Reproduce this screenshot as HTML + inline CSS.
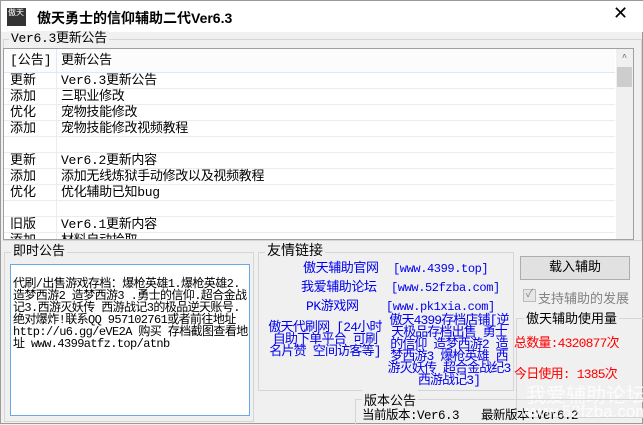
<!DOCTYPE html>
<html><head><meta charset="utf-8"><style>
*{margin:0;padding:0;box-sizing:border-box}
body{width:643px;height:424px;overflow:hidden;background:#f0f0f0;font-family:"Liberation Mono","Noto Sans CJK SC",monospace;font-size:12px;color:#000;position:relative;border:1px solid #9a9a9a}
.a{position:absolute;white-space:nowrap}
.title{left:0;top:0;width:643px;height:31px;background:#fff}
.gb{position:absolute;border:1px solid #d5d5d5}
.gl{position:absolute;background:#f0f0f0;padding:0 2px;top:-9px;left:6px;font-size:13px;line-height:16px}
.row{position:absolute;left:0;width:611px;height:16px;border-bottom:1px solid #ececec;line-height:15px;font-size:13px}
.row span{position:absolute;left:6px}
.row b{font-weight:normal;position:absolute;left:57px;letter-spacing:-0.3px}
.blue{color:#0000ee;font-size:13px;line-height:15px;letter-spacing:-0.4px}
</style></head><body>
<div class="a title"></div>
<div class="a" style="left:6px;top:7px;width:19px;height:18px;background:#333"><div style="color:#fff;font-size:8px;line-height:10px;padding:1px">傲天</div></div>
<div class="a" style="left:36px;top:7px;font-family:'Liberation Sans','Noto Sans CJK SC',sans-serif;font-weight:bold;font-size:14px">傲天勇士的信仰辅助二代Ver6.3</div>
<div class="a" style="left:612px;top:2px;font-size:18px;font-family:'Liberation Sans',sans-serif">✕</div>
<div class="gb" style="left:2px;top:38px;width:639px;height:202px"></div>
<div class="a" style="left:8px;top:30px;background:#f0f0f0;padding:0 2px;font-size:13px;line-height:16px;letter-spacing:-0.3px">Ver6.3更新公告</div>
<div class="a" style="left:2px;top:47px;width:631px;height:192px;background:#fff;border:1px solid #a0a0a0;overflow:hidden">
 <div class="row" style="top:0;height:24px;background:#fcfcfc;border-bottom:1px solid #dce9f8;line-height:24px;width:611px"><span>[公告]</span><b>更新公告</b></div>
 <div class="a" style="left:52px;top:0;width:1px;height:24px;background:#dce9f8"></div>
 <div class="a" style="left:52px;top:24px;width:1px;height:170px;background:#ececec"></div>
 <div class="row" style="top:24px"><span>更新</span><b>Ver6.3更新公告</b></div>
 <div class="row" style="top:40px"><span>添加</span><b>三职业修改</b></div>
 <div class="row" style="top:56px"><span>优化</span><b>宠物技能修改</b></div>
 <div class="row" style="top:72px"><span>添加</span><b>宠物技能修改视频教程</b></div>
 <div class="row" style="top:88px"></div>
 <div class="row" style="top:104px"><span>更新</span><b>Ver6.2更新内容</b></div>
 <div class="row" style="top:120px"><span>添加</span><b>添加无线炼狱手动修改以及视频教程</b></div>
 <div class="row" style="top:136px"><span>优化</span><b>优化辅助已知bug</b></div>
 <div class="row" style="top:152px"></div>
 <div class="row" style="top:168px"><span>旧版</span><b>Ver6.1更新内容</b></div>
 <div class="row" style="top:184px"><span>添加</span><b>材料自动拾取</b></div>
 <div class="a" style="left:612px;top:0;width:17px;height:190px;background:#f0f0f0"><div style="text-align:center;color:#606060;font-size:9px;margin-top:4px">^</div><div style="position:absolute;left:1px;top:18px;width:15px;height:20px;background:#cdcdcd"></div></div>
</div>
<div class="gb" style="left:3px;top:251px;width:250px;height:170px"><div class="gl">即时公告</div></div>
<div class="a" style="left:9px;top:263px;width:240px;height:152px;background:#fff;border:1px solid #6aa8e6;white-space:normal;font-size:12px;line-height:12px;padding:13px 1px 0 2px;word-break:break-all;letter-spacing:-0.6px">代刷/出售游戏存档：爆枪英雄1.爆枪英雄2.造梦西游2 造梦西游3 .勇士的信仰.超合金战记3.西游灭妖传 西游战记3的极品逆天账号.绝对爆炸!联系QQ 957102761或者前往地址 http://u6.gg/eVE2A 购买 存档截图查看地址 www.4399atfz.top/atnb</div>
<div class="gb" style="left:257px;top:251px;width:256px;height:139px"><div class="gl" style="font-size:14px">友情链接</div></div>
<div class="a blue" style="left:302px;top:260px">傲天辅助官网</div>
<div class="a blue" style="left:392px;top:261px;font-size:12px">[www.4399.top]</div>
<div class="a blue" style="left:300px;top:279px">我爱辅助论坛</div>
<div class="a blue" style="left:390px;top:280px;font-size:12px">[www.52fzba.com]</div>
<div class="a blue" style="left:305px;top:298px">PK游戏网</div>
<div class="a blue" style="left:385px;top:299px;font-size:12px">[www.pk1xia.com]</div>
<div class="a blue" style="left:266px;top:321px;width:116px;white-space:normal;line-height:12px;text-align:center;letter-spacing:-0.8px">傲天代刷网 [24小时自助下单平台 可刷名片赞 空间访客等]</div>
<div class="a blue" style="left:385px;top:314px;width:126px;white-space:normal;line-height:12px;text-align:center;letter-spacing:-0.9px">傲天4399存档店铺[逆天极品存档出售 勇士的信仰 造梦西游2 造梦西游3 爆枪英雄 西游灭妖传 超合金战纪3 西游战记3]</div>
<div class="a" style="left:519px;top:255px;width:110px;height:24px;border:1px solid #adadad;background:#e1e1e1;text-align:center;line-height:22px;font-size:13px">载入辅助</div>
<div class="a" style="left:522px;top:288px;width:13px;height:13px;border:1px solid #bcbcbc;background:#e6e6e6;color:#888;font-size:11px;line-height:11px;text-align:center">✓</div>
<div class="a" style="left:537px;top:287px;color:#838383;font-size:13px">支持辅助的发展</div>
<div class="gb" style="left:515px;top:317px;width:128px;height:100px;border-right:none"></div>
<div class="a" style="left:523px;top:307px;background:#f0f0f0;padding:0 2px;font-size:13px">傲天辅助使用量</div>
<div class="a" style="left:513px;top:331px;color:#f00;font-size:13px;letter-spacing:-0.8px">总数量:4320877次</div>
<div class="a" style="left:513px;top:362px;color:#f00;font-size:13px;letter-spacing:-0.8px">今日使用: 1385次</div>
<div class="a" style="left:525px;top:378px;color:#fff;font-size:20px;font-family:'Liberation Sans','Noto Sans CJK SC',sans-serif;opacity:.85">我爱辅助论坛</div>
<div class="gb" style="left:354px;top:398px;width:289px;height:26px;border-right:none;border-bottom:none"></div>
<div class="a" style="left:361px;top:389px;background:#f0f0f0;padding:0 2px;font-size:13px">版本公告</div>
<div class="a" style="left:361px;top:403px;font-size:12.5px;letter-spacing:-0.5px">当前版本:Ver6.3</div>
<div class="a" style="left:480px;top:403px;font-size:12.5px;letter-spacing:-0.5px">最新版本:Ver6.2</div>
<div class="a" style="left:520px;top:401px;color:#fff;font-size:17px;font-family:'Liberation Sans',sans-serif;opacity:.85">www.52fzba.com</div>
</body></html>
